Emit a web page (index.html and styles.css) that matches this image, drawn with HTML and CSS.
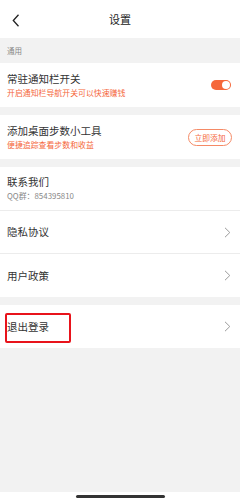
FILE: index.html
```html
<!DOCTYPE html>
<html lang="zh">
<head>
<meta charset="utf-8">
<link rel="stylesheet" href="styles.css">
</head>
<body>
<div class="page">
  <header class="nav">
    <svg class="back" width="8" height="13" viewBox="0 0 8 13"><path d="M6.5 0.8 L1.3 6.5 L6.5 12.2" fill="none" stroke="#222" stroke-width="1.3"/></svg>
    <div class="nav-title">设置</div>
  </header>
  <div class="section-label">通用</div>
  <div class="row two">
    <div class="texts">
      <div class="title">常驻通知栏开关</div>
      <div class="sub orange">开启通知栏导航开关可以快速赚钱</div>
    </div>
    <div class="toggle"><span class="knob"></span></div>
  </div>
  <div class="gap"></div>
  <div class="row two">
    <div class="texts">
      <div class="title">添加桌面步数小工具</div>
      <div class="sub orange">便捷追踪查看步数和收益</div>
    </div>
    <div class="btn">立即添加</div>
  </div>
  <div class="gap"></div>
  <div class="row two line">
    <div class="texts">
      <div class="title">联系我们</div>
      <div class="sub gray">QQ群：854395810</div>
    </div>
  </div>
  <div class="row one line">
    <div class="title">隐私协议</div>
    <svg class="chev" width="7" height="11" viewBox="0 0 7 11"><path d="M1 0.8 L5.8 5.5 L1 10.2" fill="none" stroke="#9a9a9a" stroke-width="1"/></svg>
  </div>
  <div class="row one">
    <div class="title">用户政策</div>
    <svg class="chev" width="7" height="11" viewBox="0 0 7 11"><path d="M1 0.8 L5.8 5.5 L1 10.2" fill="none" stroke="#9a9a9a" stroke-width="1"/></svg>
  </div>
  <div class="gap"></div>
  <div class="row one logout">
    <div class="title">退出登录</div>
    <svg class="chev" width="7" height="11" viewBox="0 0 7 11"><path d="M1 0.8 L5.8 5.5 L1 10.2" fill="none" stroke="#9a9a9a" stroke-width="1"/></svg>
    <div class="highlight"></div>
  </div>
  <div class="filler"></div>
  <div class="home"><span class="indicator"></span></div>
</div>
</body>
</html>
```
FILE: styles.css
```css
* { box-sizing: border-box; margin: 0; padding: 0; }
html, body { width: 240px; height: 500px; }
body {
  font-family: "Noto Sans CJK SC", "Noto Sans", sans-serif;
  background: #f2f2f2;
  color: #333;
  overflow: hidden;
}
.page { display: flex; flex-direction: column; height: 500px; }
.nav {
  height: 38px;
  background: #fff;
  display: flex;
  align-items: center;
  justify-content: center;
  position: relative;
}
.back { position: absolute; left: 12px; top: 14px; }
.nav-title { font-size: 11px; line-height: 14px; color: #222; }
.section-label {
  height: 25px;
  padding-left: 7px;
  font-size: 7.5px;
  line-height: 25px;
  color: #888;
}
.row {
  background: #fff;
  display: flex;
  align-items: center;
  padding: 0 8px 0 7px;
  position: relative;
}
.row.two { height: 44px; }
.row.one { height: 43px; justify-content: space-between; }
.row.line { border-bottom: 1px solid #ececec; }
.row.two .texts { flex: 1; }
.title { font-size: 10.5px; line-height: 14px; color: #333; }
.sub { font-size: 7.9px; line-height: 12px; margin-top: 1px; }
.orange { color: #f5673a; }
.gray { color: #888; }
.gap { height: 8px; }
.toggle {
  width: 20px;
  height: 10px;
  border-radius: 5px;
  background: #f5673a;
  position: relative;
  margin-right: 1px;
}
.knob {
  position: absolute;
  right: 1px;
  top: 1px;
  width: 8px;
  height: 8px;
  border-radius: 50%;
  background: #fff;
}
.btn {
  width: 44px;
  height: 17px;
  border: 1px solid #f58a66;
  border-radius: 9px;
  color: #f5673a;
  font-size: 7.8px;
  line-height: 15px;
  text-align: center;
}
.chev { margin-right: 1px; }
.highlight {
  position: absolute;
  left: 5px;
  top: 8px;
  width: 66px;
  height: 30px;
  border: 2px solid #e8131b;
  border-radius: 2px;
}
.filler { flex: 1; }
.home {
  height: 8px;
  background: #fff;
  display: flex;
  justify-content: center;
  padding-top: 3px;
}
.indicator {
  width: 89px;
  height: 3px;
  background: #333;
  border-radius: 2px;
}
```
